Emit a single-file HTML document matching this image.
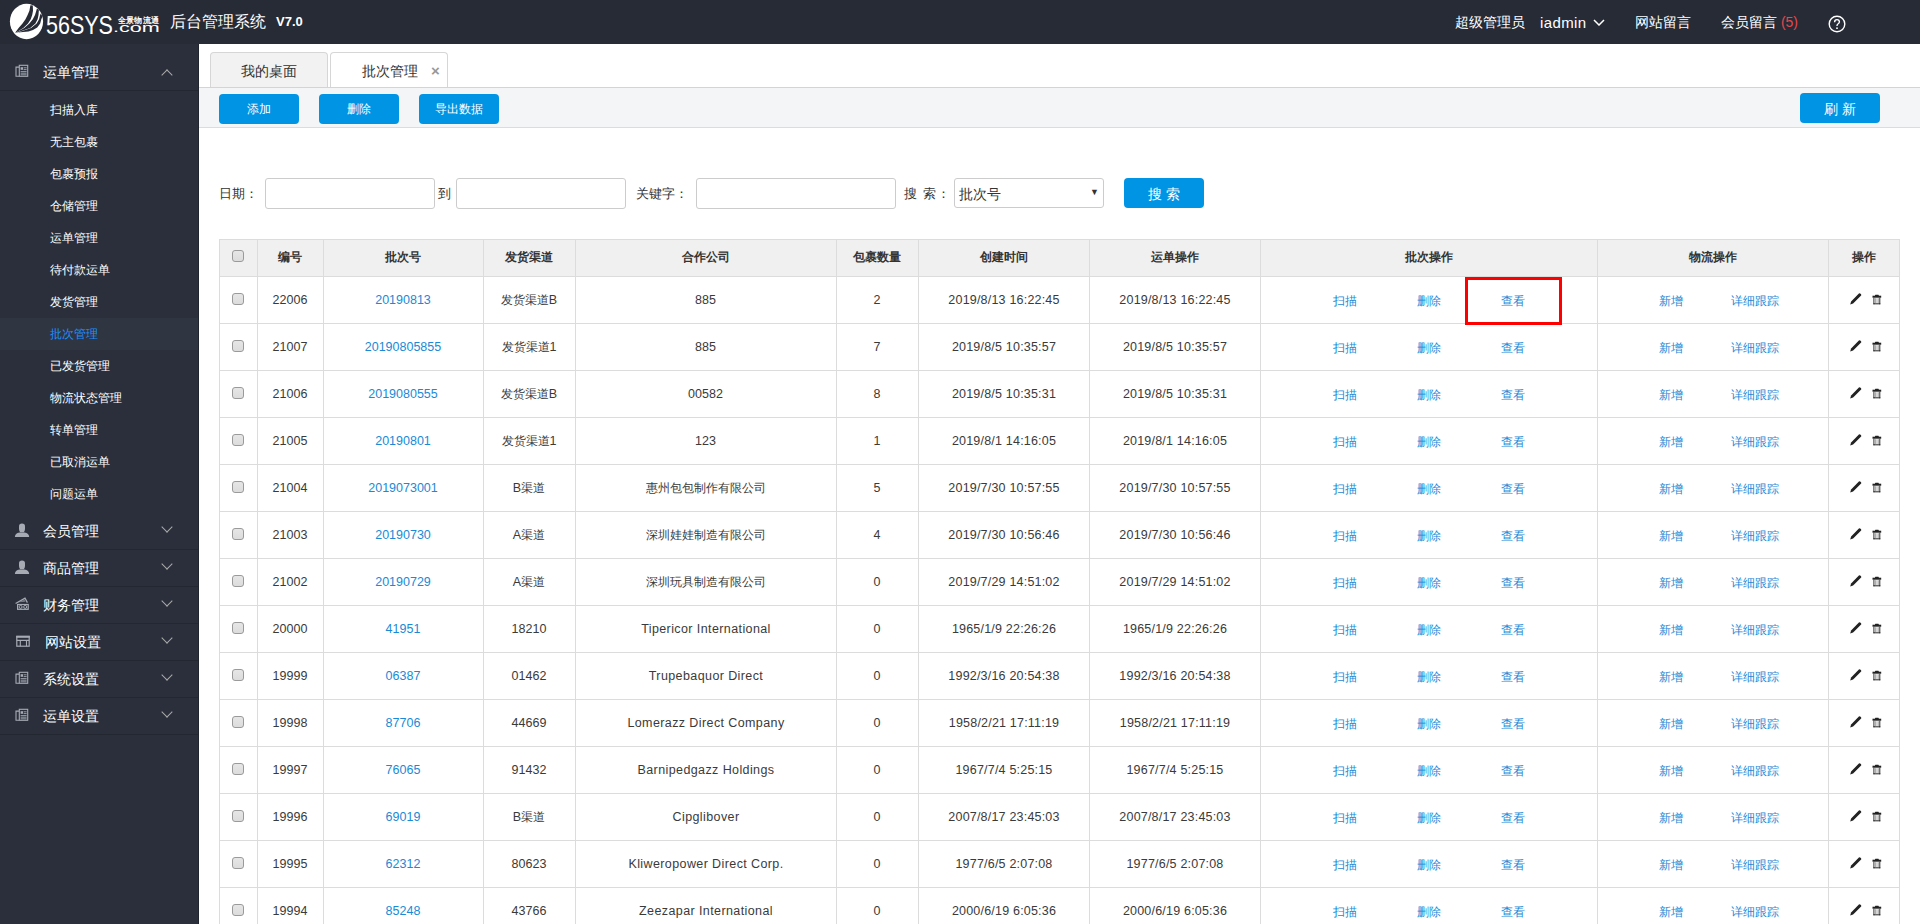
<!DOCTYPE html>
<html><head><meta charset="utf-8"><style>
*{margin:0;padding:0;box-sizing:border-box}
body{width:1920px;height:924px;overflow:hidden;background:#fff;font-family:"Liberation Sans",sans-serif;position:relative}
#hdr{position:absolute;left:0;top:0;width:1920px;height:44px;background:#272b36;color:#fff}
.logo{position:absolute;left:0;top:0;width:165px;height:44px}
.l56{position:absolute;left:46px;top:11px;font-size:25px;line-height:29px;color:#fff;transform:scaleX(0.86);transform-origin:left}
.lcom{position:absolute;left:113px;top:21px;font-size:13px;line-height:14px;color:#fff;transform:scaleX(1.66);transform-origin:left}
.lcn{position:absolute;left:118px;top:16px;font-size:8px;line-height:10px;color:#fff;font-weight:bold;letter-spacing:0.2px}
.htitle{position:absolute;left:170px;top:12px;font-size:16px;color:#fff}
.hver{position:absolute;left:276px;top:14px;font-size:13px;font-weight:bold;color:#fff}
.hr{position:absolute;top:14px;font-size:14px;color:#fff;white-space:nowrap}
#side{position:absolute;left:0;top:44px;width:199px;height:880px;background:#2a2f3b;border-right:1px solid #20242c}
.sgroup{position:absolute;left:0;width:198px;height:37px;border-bottom:1px solid #23272f;color:#fff}
#side .sgroup, #side .sitem{margin-top:-44px}
.sic{position:absolute;left:14px;top:10px;width:16px;height:16px}
.sic svg{display:block}
.stxt{position:absolute;left:43px;top:10px;font-size:14px;white-space:nowrap}
.chev{position:absolute;left:163px;top:10px;width:8px;height:8px;border-right:1px solid #aaa;border-bottom:1px solid #aaa;transform:rotate(45deg)}
.chev.up{top:26.5px;transform:rotate(-135deg)}
.sitem{position:absolute;left:0;width:198px;height:32px;line-height:32px;padding-left:50px;font-size:12px;color:#fff}
.sitem.active{background:#2f3541;color:#1e90ff}
#main{position:absolute;left:0;top:0;width:1920px;height:924px}
.tabline{position:absolute;left:199px;top:87px;width:1721px;height:41px;background:#f4f5f6;border-top:1px solid #d4d4d4;border-bottom:1px solid #dcdcdc}
.tab{position:absolute;top:52px;height:35px;width:118px;border:1px solid #d6d6d6;border-bottom:none;border-radius:4px 4px 0 0;font-size:14px;line-height:36px;color:#333;text-align:center}
.t1{left:210px;background:#f2f2f2}
.t2{left:330px;background:#fff;padding-left:1px}
.x{position:absolute;left:100px;top:0;font-size:15px;font-weight:bold;color:#999}
.btn{position:absolute;width:80px;height:30px;background:#0094e5;color:#fff;border-radius:4px;font-size:12px;line-height:30px;text-align:center}
.lbl{position:absolute;top:185px;font-size:13px;color:#333;white-space:nowrap}
.inp{position:absolute;top:178px;height:31px;border:1px solid #ccc;border-radius:3px}
.sel{position:absolute;left:954px;top:178px;width:150px;height:30px;border:1px solid #ccc;border-radius:3px;font-size:14px;line-height:31px;padding-left:4px;color:#333}
.arr{position:absolute;right:4px;top:-2px;font-size:9px}
.thead{position:absolute;left:219px;width:1681px;background:#f0f0f0}
.th{position:absolute;text-align:center;font-size:12px;font-weight:bold;color:#333}
.td{position:absolute;text-align:center;font-size:12.5px;color:#3a3a3a;white-space:nowrap}
.td.dt{letter-spacing:0.2px;padding-left:1px}
.td.en{letter-spacing:0.4px;padding-left:1px}
.cj{font-size:12px;letter-spacing:0}
.td.link{color:#1a8ad6}
.lk{position:absolute;font-size:12px;color:#1a8ad6;white-space:nowrap}
.icw{position:absolute;width:12px;height:12px}
.cb{position:absolute;width:12px;height:12px;border:1px solid #9a9a9a;border-radius:3px;background:linear-gradient(#e6e6e6,#dcdcdc)}
.hl{position:absolute;left:219px;width:1681px;height:1px;background:#dcdcdc}
.vl{position:absolute;width:1px;background:#dcdcdc}
.redbox{position:absolute;left:1465px;top:277px;width:97px;height:48px;border:3px solid #f00}

</style></head><body>
<div id="hdr">
  <div class="logo">
    <svg width="50" height="44" viewBox="0 0 50 44" style="position:absolute;left:0;top:0">
      <ellipse cx="26.5" cy="21.5" rx="16.6" ry="17.7" fill="#fff"/>
      <path d="M15.1 32.7 L18.6 28 L22.5 23.6 L25.5 19.3 L27.6 15 L29.4 10.7 L30.4 5.2 L32.8 5.6 L33.0 10.7 L32.2 15 L30.7 19.3 L28 23.6 L23.3 28 L16 32.5Z" fill="#272b36"/>
      <path d="M16 32.6 L24.2 28 L29.4 23.6 L32.8 19.3 L35 15 L36.3 10.7 L36.9 8.6 L38.9 9.8 L38.5 15 L37.6 19.3 L35.4 23.6 L30.2 28 L17 32.6Z" fill="#272b36"/>
      <path d="M17 32.7 L31.1 28 L36.7 23.6 L39.1 19.3 L40.1 15 L40.8 13.6 L42.5 16.5 L41.3 19.3 L40.2 23.6 L37.2 27.6 L33 30 L28.5 31.4 L15.1 32.7Z" fill="#272b36"/>
    </svg>
    <div class="l56">56SYS</div><div class="lcom">.com</div><div class="lcn">全景物流通</div>
  </div>
  <div class="htitle">后台管理系统</div><div class="hver">V7.0</div>
  <div class="hr" style="left:1455px">超级管理员</div>
  <div class="hr" style="left:1540px;font-size:15px;letter-spacing:0.4px">iadmin</div>
  <svg style="position:absolute;left:1593px;top:19px" width="12" height="7" viewBox="0 0 12 7"><path d="M1 1 L6 6 L11 1" fill="none" stroke="#fff" stroke-width="1.5"/></svg>
  <div class="hr" style="left:1635px">网站留言</div>
  <div class="hr" style="left:1721px">会员留言 <span style="color:#e5484d">(5)</span></div>
  <svg style="position:absolute;left:1828px;top:15px" width="18" height="18" viewBox="0 0 18 18"><circle cx="9" cy="9" r="7.8" fill="none" stroke="#fff" stroke-width="1.4"/><path d="M6.6 7.2 Q6.6 4.6 9 4.6 Q11.4 4.6 11.4 6.8 Q11.4 8.2 9.9 9 Q9 9.5 9 11" fill="none" stroke="#fff" stroke-width="1.4"/><circle cx="9" cy="13.2" r="0.9" fill="#fff"/></svg>
</div>
<div id="side">
<div class="sgroup" style="top:44px;height:47px"><span class="sic" style="top:20px"><svg width="16" height="16" viewBox="0 0 16 16"><path d="M5 3.1 H2 V12.3 H5" fill="none" stroke="#a6abb4" stroke-width="1.1"/><rect x="5.3" y="1.3" width="8.4" height="11" fill="none" stroke="#a6abb4" stroke-width="1.1"/><rect x="6.6" y="3.2" width="2.4" height="2.6" fill="#a6abb4"/><path d="M9.6 3.8H12.6M9.6 5.6H12.6M6.6 7.6H12.6M6.6 9.2H12.6M6.6 10.8H12.6" stroke="#a6abb4" stroke-width="0.9"/></svg></span><span class="stxt" style="top:20px">运单管理</span><span class="chev up"></span></div>
<div class="sitem" style="top:94px">扫描入库</div>
<div class="sitem" style="top:126px">无主包裹</div>
<div class="sitem" style="top:158px">包裹预报</div>
<div class="sitem" style="top:190px">仓储管理</div>
<div class="sitem" style="top:222px">运单管理</div>
<div class="sitem" style="top:254px">待付款运单</div>
<div class="sitem" style="top:286px">发货管理</div>
<div class="sitem active" style="top:318px">批次管理</div>
<div class="sitem" style="top:350px">已发货管理</div>
<div class="sitem" style="top:382px">物流状态管理</div>
<div class="sitem" style="top:414px">转单管理</div>
<div class="sitem" style="top:446px">已取消运单</div>
<div class="sitem" style="top:478px">问题运单</div>
<div class="sgroup g2" style="top:513px"><span class="sic" style="top:10px"><svg width="16" height="16" viewBox="0 0 16 16"><path d="M5 3.2 Q5 0.4 8 0.4 Q11 0.4 11 3.2 L11 6 Q11 8 9.8 9.3 L6.2 9.3 Q5 8 5 6 Z" fill="#a6abb4"/><path d="M0.9 14 Q1 10.5 5.5 9.6 L10.5 9.6 Q15 10.5 15.2 14 Z" fill="#a6abb4"/></svg></span><span class="stxt" style="left:43px">会员管理</span><span class="chev"></span></div>
<div class="sgroup g2" style="top:550px"><span class="sic" style="top:10px"><svg width="16" height="16" viewBox="0 0 16 16"><path d="M5 3.2 Q5 0.4 8 0.4 Q11 0.4 11 3.2 L11 6 Q11 8 9.8 9.3 L6.2 9.3 Q5 8 5 6 Z" fill="#a6abb4"/><path d="M0.9 14 Q1 10.5 5.5 9.6 L10.5 9.6 Q15 10.5 15.2 14 Z" fill="#a6abb4"/></svg></span><span class="stxt" style="left:43px">商品管理</span><span class="chev"></span></div>
<div class="sgroup g2" style="top:587px"><span class="sic" style="top:10px"><svg width="16" height="16" viewBox="0 0 16 16"><path d="M1.6 6.6 L11 1.2 L13.4 5.6" fill="none" stroke="#a6abb4" stroke-width="1.2"/><path d="M5 5.3 L10.5 2.6 L11.5 4.8Z" fill="#a6abb4" opacity="0.6"/><rect x="3.6" y="7.5" width="10.6" height="4.8" fill="none" stroke="#a6abb4" stroke-width="1.2"/><circle cx="6.6" cy="9.9" r="1.5" fill="none" stroke="#a6abb4" stroke-width="1"/><circle cx="11.2" cy="9.9" r="1.5" fill="none" stroke="#a6abb4" stroke-width="1"/></svg></span><span class="stxt" style="left:43px">财务管理</span><span class="chev"></span></div>
<div class="sgroup g2" style="top:624px"><span class="sic" style="top:11px"><svg width="16" height="16" viewBox="0 0 16 16"><rect x="2.8" y="1.4" width="12.4" height="9.8" fill="none" stroke="#a6abb4" stroke-width="1.2"/><rect x="2.2" y="0.8" width="13.6" height="2" fill="#a6abb4"/><path d="M2.8 5.4H15.2M6.3 5.4V11.2M12.5 5.4V11.2" stroke="#a6abb4" stroke-width="1.1"/></svg></span><span class="stxt" style="left:45px">网站设置</span><span class="chev"></span></div>
<div class="sgroup g2" style="top:661px"><span class="sic" style="top:10px"><svg width="16" height="16" viewBox="0 0 16 16"><path d="M5 3.1 H2 V12.3 H5" fill="none" stroke="#a6abb4" stroke-width="1.1"/><rect x="5.3" y="1.3" width="8.4" height="11" fill="none" stroke="#a6abb4" stroke-width="1.1"/><rect x="6.6" y="3.2" width="2.4" height="2.6" fill="#a6abb4"/><path d="M9.6 3.8H12.6M9.6 5.6H12.6M6.6 7.6H12.6M6.6 9.2H12.6M6.6 10.8H12.6" stroke="#a6abb4" stroke-width="0.9"/></svg></span><span class="stxt" style="left:43px">系统设置</span><span class="chev"></span></div>
<div class="sgroup g2" style="top:698px"><span class="sic" style="top:10px"><svg width="16" height="16" viewBox="0 0 16 16"><path d="M5 3.1 H2 V12.3 H5" fill="none" stroke="#a6abb4" stroke-width="1.1"/><rect x="5.3" y="1.3" width="8.4" height="11" fill="none" stroke="#a6abb4" stroke-width="1.1"/><rect x="6.6" y="3.2" width="2.4" height="2.6" fill="#a6abb4"/><path d="M9.6 3.8H12.6M9.6 5.6H12.6M6.6 7.6H12.6M6.6 9.2H12.6M6.6 10.8H12.6" stroke="#a6abb4" stroke-width="0.9"/></svg></span><span class="stxt" style="left:43px">运单设置</span><span class="chev"></span></div>
</div>
<div id="main">
  <div class="tabline"></div>
  <div class="tab t1">我的桌面</div>
  <div class="tab t2">批次管理<span class="x">×</span></div>
  <div class="toolbar"></div>
  <div class="btn" style="left:219px;top:94px">添加</div>
  <div class="btn" style="left:319px;top:94px">删除</div>
  <div class="btn" style="left:419px;top:94px">导出数据</div>
  <div class="btn" style="left:1800px;top:93px;font-size:14px;line-height:32px">刷 新</div>
  <div class="lbl" style="left:219px">日期：</div>
  <div class="inp" style="left:265px;width:170px"></div>
  <div class="lbl" style="left:438px">到</div>
  <div class="inp" style="left:456px;width:170px"></div>
  <div class="lbl" style="left:636px">关键字：</div>
  <div class="inp" style="left:696px;width:200px"></div>
  <div class="lbl" style="left:904px;letter-spacing:1px">搜 索：</div>
  <div class="sel">批次号<span class="arr">▼</span></div>
  <div class="btn" style="left:1124px;top:178px;height:30px;line-height:32px;font-size:14px">搜 索</div>
<div class="thead" style="top:239px;height:37px"></div>
<div class="cb" style="left:232px;top:250px"></div>
<div class="th" style="left:257px;width:66px;top:239px;height:37px;line-height:37px">编号</div>
<div class="th" style="left:323px;width:160px;top:239px;height:37px;line-height:37px">批次号</div>
<div class="th" style="left:483px;width:92px;top:239px;height:37px;line-height:37px">发货渠道</div>
<div class="th" style="left:575px;width:261px;top:239px;height:37px;line-height:37px">合作公司</div>
<div class="th" style="left:836px;width:82px;top:239px;height:37px;line-height:37px">包裹数量</div>
<div class="th" style="left:918px;width:171px;top:239px;height:37px;line-height:37px">创建时间</div>
<div class="th" style="left:1089px;width:171px;top:239px;height:37px;line-height:37px">运单操作</div>
<div class="th" style="left:1260px;width:337px;top:239px;height:37px;line-height:37px">批次操作</div>
<div class="th" style="left:1597px;width:231px;top:239px;height:37px;line-height:37px">物流操作</div>
<div class="th" style="left:1828px;width:71px;top:239px;height:37px;line-height:37px">操作</div>
<div class="cb" style="left:232px;top:293px"></div>
<div class="td" style="left:257px;width:66px;top:277px;height:47px;line-height:47px">22006</div>
<div class="td link" style="left:323px;width:160px;top:277px;height:47px;line-height:47px">20190813</div>
<div class="td" style="left:483px;width:92px;top:277px;height:47px;line-height:47px"><span class="cj">发货渠道</span>B</div>
<div class="td" style="left:575px;width:261px;top:277px;height:47px;line-height:47px">885</div>
<div class="td" style="left:836px;width:82px;top:277px;height:47px;line-height:47px">2</div>
<div class="td dt" style="left:918px;width:171px;top:277px;height:47px;line-height:47px">2019/8/13 16:22:45</div>
<div class="td dt" style="left:1089px;width:171px;top:277px;height:47px;line-height:47px">2019/8/13 16:22:45</div>
<div class="lk" style="left:1333px;top:278px;line-height:47px">扫描</div>
<div class="lk" style="left:1417px;top:278px;line-height:47px">删除</div>
<div class="lk" style="left:1501px;top:278px;line-height:47px">查看</div>
<div class="lk" style="left:1659px;top:278px;line-height:47px">新增</div>
<div class="lk" style="left:1731px;top:278px;line-height:47px">详细跟踪</div>
<div class="icw" style="left:1849px;top:292px"><svg width="13" height="13" viewBox="0 0 13 13"><path d="M1.2 11.6 L2.1 8.4 L9.9 0.6 Q10.7 -0.1 11.5 0.7 L11.9 1.1 Q12.6 1.9 11.9 2.7 L4.1 10.5 Z" fill="#222"/></svg></div>
<div class="icw" style="left:1872px;top:292px"><svg width="10" height="12" viewBox="0 0 10 12"><rect x="3" y="0.7" width="3.8" height="1.2" rx="0.5" fill="#222"/><rect x="0.5" y="1.7" width="8.7" height="2" fill="#222"/><rect x="1.4" y="3.7" width="1" height="6.6" fill="#333"/><rect x="7.3" y="3.7" width="1" height="6.6" fill="#333"/><rect x="1.4" y="9.3" width="6.9" height="1" fill="#222"/><rect x="3.3" y="4.2" width="0.7" height="5" fill="#8a8a8a"/><rect x="4.6" y="4.2" width="0.7" height="5" fill="#9a9a9a"/><rect x="5.9" y="4.2" width="0.7" height="5" fill="#8a8a8a"/></svg></div>
<div class="cb" style="left:232px;top:340px"></div>
<div class="td" style="left:257px;width:66px;top:324px;height:47px;line-height:47px">21007</div>
<div class="td link" style="left:323px;width:160px;top:324px;height:47px;line-height:47px">20190805855</div>
<div class="td" style="left:483px;width:92px;top:324px;height:47px;line-height:47px"><span class="cj">发货渠道</span>1</div>
<div class="td" style="left:575px;width:261px;top:324px;height:47px;line-height:47px">885</div>
<div class="td" style="left:836px;width:82px;top:324px;height:47px;line-height:47px">7</div>
<div class="td dt" style="left:918px;width:171px;top:324px;height:47px;line-height:47px">2019/8/5 10:35:57</div>
<div class="td dt" style="left:1089px;width:171px;top:324px;height:47px;line-height:47px">2019/8/5 10:35:57</div>
<div class="lk" style="left:1333px;top:325px;line-height:47px">扫描</div>
<div class="lk" style="left:1417px;top:325px;line-height:47px">删除</div>
<div class="lk" style="left:1501px;top:325px;line-height:47px">查看</div>
<div class="lk" style="left:1659px;top:325px;line-height:47px">新增</div>
<div class="lk" style="left:1731px;top:325px;line-height:47px">详细跟踪</div>
<div class="icw" style="left:1849px;top:339px"><svg width="13" height="13" viewBox="0 0 13 13"><path d="M1.2 11.6 L2.1 8.4 L9.9 0.6 Q10.7 -0.1 11.5 0.7 L11.9 1.1 Q12.6 1.9 11.9 2.7 L4.1 10.5 Z" fill="#222"/></svg></div>
<div class="icw" style="left:1872px;top:339px"><svg width="10" height="12" viewBox="0 0 10 12"><rect x="3" y="0.7" width="3.8" height="1.2" rx="0.5" fill="#222"/><rect x="0.5" y="1.7" width="8.7" height="2" fill="#222"/><rect x="1.4" y="3.7" width="1" height="6.6" fill="#333"/><rect x="7.3" y="3.7" width="1" height="6.6" fill="#333"/><rect x="1.4" y="9.3" width="6.9" height="1" fill="#222"/><rect x="3.3" y="4.2" width="0.7" height="5" fill="#8a8a8a"/><rect x="4.6" y="4.2" width="0.7" height="5" fill="#9a9a9a"/><rect x="5.9" y="4.2" width="0.7" height="5" fill="#8a8a8a"/></svg></div>
<div class="cb" style="left:232px;top:387px"></div>
<div class="td" style="left:257px;width:66px;top:371px;height:47px;line-height:47px">21006</div>
<div class="td link" style="left:323px;width:160px;top:371px;height:47px;line-height:47px">2019080555</div>
<div class="td" style="left:483px;width:92px;top:371px;height:47px;line-height:47px"><span class="cj">发货渠道</span>B</div>
<div class="td" style="left:575px;width:261px;top:371px;height:47px;line-height:47px">00582</div>
<div class="td" style="left:836px;width:82px;top:371px;height:47px;line-height:47px">8</div>
<div class="td dt" style="left:918px;width:171px;top:371px;height:47px;line-height:47px">2019/8/5 10:35:31</div>
<div class="td dt" style="left:1089px;width:171px;top:371px;height:47px;line-height:47px">2019/8/5 10:35:31</div>
<div class="lk" style="left:1333px;top:372px;line-height:47px">扫描</div>
<div class="lk" style="left:1417px;top:372px;line-height:47px">删除</div>
<div class="lk" style="left:1501px;top:372px;line-height:47px">查看</div>
<div class="lk" style="left:1659px;top:372px;line-height:47px">新增</div>
<div class="lk" style="left:1731px;top:372px;line-height:47px">详细跟踪</div>
<div class="icw" style="left:1849px;top:386px"><svg width="13" height="13" viewBox="0 0 13 13"><path d="M1.2 11.6 L2.1 8.4 L9.9 0.6 Q10.7 -0.1 11.5 0.7 L11.9 1.1 Q12.6 1.9 11.9 2.7 L4.1 10.5 Z" fill="#222"/></svg></div>
<div class="icw" style="left:1872px;top:386px"><svg width="10" height="12" viewBox="0 0 10 12"><rect x="3" y="0.7" width="3.8" height="1.2" rx="0.5" fill="#222"/><rect x="0.5" y="1.7" width="8.7" height="2" fill="#222"/><rect x="1.4" y="3.7" width="1" height="6.6" fill="#333"/><rect x="7.3" y="3.7" width="1" height="6.6" fill="#333"/><rect x="1.4" y="9.3" width="6.9" height="1" fill="#222"/><rect x="3.3" y="4.2" width="0.7" height="5" fill="#8a8a8a"/><rect x="4.6" y="4.2" width="0.7" height="5" fill="#9a9a9a"/><rect x="5.9" y="4.2" width="0.7" height="5" fill="#8a8a8a"/></svg></div>
<div class="cb" style="left:232px;top:434px"></div>
<div class="td" style="left:257px;width:66px;top:418px;height:47px;line-height:47px">21005</div>
<div class="td link" style="left:323px;width:160px;top:418px;height:47px;line-height:47px">20190801</div>
<div class="td" style="left:483px;width:92px;top:418px;height:47px;line-height:47px"><span class="cj">发货渠道</span>1</div>
<div class="td" style="left:575px;width:261px;top:418px;height:47px;line-height:47px">123</div>
<div class="td" style="left:836px;width:82px;top:418px;height:47px;line-height:47px">1</div>
<div class="td dt" style="left:918px;width:171px;top:418px;height:47px;line-height:47px">2019/8/1 14:16:05</div>
<div class="td dt" style="left:1089px;width:171px;top:418px;height:47px;line-height:47px">2019/8/1 14:16:05</div>
<div class="lk" style="left:1333px;top:419px;line-height:47px">扫描</div>
<div class="lk" style="left:1417px;top:419px;line-height:47px">删除</div>
<div class="lk" style="left:1501px;top:419px;line-height:47px">查看</div>
<div class="lk" style="left:1659px;top:419px;line-height:47px">新增</div>
<div class="lk" style="left:1731px;top:419px;line-height:47px">详细跟踪</div>
<div class="icw" style="left:1849px;top:433px"><svg width="13" height="13" viewBox="0 0 13 13"><path d="M1.2 11.6 L2.1 8.4 L9.9 0.6 Q10.7 -0.1 11.5 0.7 L11.9 1.1 Q12.6 1.9 11.9 2.7 L4.1 10.5 Z" fill="#222"/></svg></div>
<div class="icw" style="left:1872px;top:433px"><svg width="10" height="12" viewBox="0 0 10 12"><rect x="3" y="0.7" width="3.8" height="1.2" rx="0.5" fill="#222"/><rect x="0.5" y="1.7" width="8.7" height="2" fill="#222"/><rect x="1.4" y="3.7" width="1" height="6.6" fill="#333"/><rect x="7.3" y="3.7" width="1" height="6.6" fill="#333"/><rect x="1.4" y="9.3" width="6.9" height="1" fill="#222"/><rect x="3.3" y="4.2" width="0.7" height="5" fill="#8a8a8a"/><rect x="4.6" y="4.2" width="0.7" height="5" fill="#9a9a9a"/><rect x="5.9" y="4.2" width="0.7" height="5" fill="#8a8a8a"/></svg></div>
<div class="cb" style="left:232px;top:481px"></div>
<div class="td" style="left:257px;width:66px;top:465px;height:47px;line-height:47px">21004</div>
<div class="td link" style="left:323px;width:160px;top:465px;height:47px;line-height:47px">2019073001</div>
<div class="td" style="left:483px;width:92px;top:465px;height:47px;line-height:47px">B<span class="cj">渠道</span></div>
<div class="td" style="left:575px;width:261px;top:465px;height:47px;line-height:47px"><span class="cj">惠州包包制作有限公司</span></div>
<div class="td" style="left:836px;width:82px;top:465px;height:47px;line-height:47px">5</div>
<div class="td dt" style="left:918px;width:171px;top:465px;height:47px;line-height:47px">2019/7/30 10:57:55</div>
<div class="td dt" style="left:1089px;width:171px;top:465px;height:47px;line-height:47px">2019/7/30 10:57:55</div>
<div class="lk" style="left:1333px;top:466px;line-height:47px">扫描</div>
<div class="lk" style="left:1417px;top:466px;line-height:47px">删除</div>
<div class="lk" style="left:1501px;top:466px;line-height:47px">查看</div>
<div class="lk" style="left:1659px;top:466px;line-height:47px">新增</div>
<div class="lk" style="left:1731px;top:466px;line-height:47px">详细跟踪</div>
<div class="icw" style="left:1849px;top:480px"><svg width="13" height="13" viewBox="0 0 13 13"><path d="M1.2 11.6 L2.1 8.4 L9.9 0.6 Q10.7 -0.1 11.5 0.7 L11.9 1.1 Q12.6 1.9 11.9 2.7 L4.1 10.5 Z" fill="#222"/></svg></div>
<div class="icw" style="left:1872px;top:480px"><svg width="10" height="12" viewBox="0 0 10 12"><rect x="3" y="0.7" width="3.8" height="1.2" rx="0.5" fill="#222"/><rect x="0.5" y="1.7" width="8.7" height="2" fill="#222"/><rect x="1.4" y="3.7" width="1" height="6.6" fill="#333"/><rect x="7.3" y="3.7" width="1" height="6.6" fill="#333"/><rect x="1.4" y="9.3" width="6.9" height="1" fill="#222"/><rect x="3.3" y="4.2" width="0.7" height="5" fill="#8a8a8a"/><rect x="4.6" y="4.2" width="0.7" height="5" fill="#9a9a9a"/><rect x="5.9" y="4.2" width="0.7" height="5" fill="#8a8a8a"/></svg></div>
<div class="cb" style="left:232px;top:528px"></div>
<div class="td" style="left:257px;width:66px;top:512px;height:47px;line-height:47px">21003</div>
<div class="td link" style="left:323px;width:160px;top:512px;height:47px;line-height:47px">20190730</div>
<div class="td" style="left:483px;width:92px;top:512px;height:47px;line-height:47px">A<span class="cj">渠道</span></div>
<div class="td" style="left:575px;width:261px;top:512px;height:47px;line-height:47px"><span class="cj">深圳娃娃制造有限公司</span></div>
<div class="td" style="left:836px;width:82px;top:512px;height:47px;line-height:47px">4</div>
<div class="td dt" style="left:918px;width:171px;top:512px;height:47px;line-height:47px">2019/7/30 10:56:46</div>
<div class="td dt" style="left:1089px;width:171px;top:512px;height:47px;line-height:47px">2019/7/30 10:56:46</div>
<div class="lk" style="left:1333px;top:513px;line-height:47px">扫描</div>
<div class="lk" style="left:1417px;top:513px;line-height:47px">删除</div>
<div class="lk" style="left:1501px;top:513px;line-height:47px">查看</div>
<div class="lk" style="left:1659px;top:513px;line-height:47px">新增</div>
<div class="lk" style="left:1731px;top:513px;line-height:47px">详细跟踪</div>
<div class="icw" style="left:1849px;top:527px"><svg width="13" height="13" viewBox="0 0 13 13"><path d="M1.2 11.6 L2.1 8.4 L9.9 0.6 Q10.7 -0.1 11.5 0.7 L11.9 1.1 Q12.6 1.9 11.9 2.7 L4.1 10.5 Z" fill="#222"/></svg></div>
<div class="icw" style="left:1872px;top:527px"><svg width="10" height="12" viewBox="0 0 10 12"><rect x="3" y="0.7" width="3.8" height="1.2" rx="0.5" fill="#222"/><rect x="0.5" y="1.7" width="8.7" height="2" fill="#222"/><rect x="1.4" y="3.7" width="1" height="6.6" fill="#333"/><rect x="7.3" y="3.7" width="1" height="6.6" fill="#333"/><rect x="1.4" y="9.3" width="6.9" height="1" fill="#222"/><rect x="3.3" y="4.2" width="0.7" height="5" fill="#8a8a8a"/><rect x="4.6" y="4.2" width="0.7" height="5" fill="#9a9a9a"/><rect x="5.9" y="4.2" width="0.7" height="5" fill="#8a8a8a"/></svg></div>
<div class="cb" style="left:232px;top:575px"></div>
<div class="td" style="left:257px;width:66px;top:559px;height:47px;line-height:47px">21002</div>
<div class="td link" style="left:323px;width:160px;top:559px;height:47px;line-height:47px">20190729</div>
<div class="td" style="left:483px;width:92px;top:559px;height:47px;line-height:47px">A<span class="cj">渠道</span></div>
<div class="td" style="left:575px;width:261px;top:559px;height:47px;line-height:47px"><span class="cj">深圳玩具制造有限公司</span></div>
<div class="td" style="left:836px;width:82px;top:559px;height:47px;line-height:47px">0</div>
<div class="td dt" style="left:918px;width:171px;top:559px;height:47px;line-height:47px">2019/7/29 14:51:02</div>
<div class="td dt" style="left:1089px;width:171px;top:559px;height:47px;line-height:47px">2019/7/29 14:51:02</div>
<div class="lk" style="left:1333px;top:560px;line-height:47px">扫描</div>
<div class="lk" style="left:1417px;top:560px;line-height:47px">删除</div>
<div class="lk" style="left:1501px;top:560px;line-height:47px">查看</div>
<div class="lk" style="left:1659px;top:560px;line-height:47px">新增</div>
<div class="lk" style="left:1731px;top:560px;line-height:47px">详细跟踪</div>
<div class="icw" style="left:1849px;top:574px"><svg width="13" height="13" viewBox="0 0 13 13"><path d="M1.2 11.6 L2.1 8.4 L9.9 0.6 Q10.7 -0.1 11.5 0.7 L11.9 1.1 Q12.6 1.9 11.9 2.7 L4.1 10.5 Z" fill="#222"/></svg></div>
<div class="icw" style="left:1872px;top:574px"><svg width="10" height="12" viewBox="0 0 10 12"><rect x="3" y="0.7" width="3.8" height="1.2" rx="0.5" fill="#222"/><rect x="0.5" y="1.7" width="8.7" height="2" fill="#222"/><rect x="1.4" y="3.7" width="1" height="6.6" fill="#333"/><rect x="7.3" y="3.7" width="1" height="6.6" fill="#333"/><rect x="1.4" y="9.3" width="6.9" height="1" fill="#222"/><rect x="3.3" y="4.2" width="0.7" height="5" fill="#8a8a8a"/><rect x="4.6" y="4.2" width="0.7" height="5" fill="#9a9a9a"/><rect x="5.9" y="4.2" width="0.7" height="5" fill="#8a8a8a"/></svg></div>
<div class="cb" style="left:232px;top:622px"></div>
<div class="td" style="left:257px;width:66px;top:606px;height:47px;line-height:47px">20000</div>
<div class="td link" style="left:323px;width:160px;top:606px;height:47px;line-height:47px">41951</div>
<div class="td" style="left:483px;width:92px;top:606px;height:47px;line-height:47px">18210</div>
<div class="td en" style="left:575px;width:261px;top:606px;height:47px;line-height:47px">Tipericor International</div>
<div class="td" style="left:836px;width:82px;top:606px;height:47px;line-height:47px">0</div>
<div class="td dt" style="left:918px;width:171px;top:606px;height:47px;line-height:47px">1965/1/9 22:26:26</div>
<div class="td dt" style="left:1089px;width:171px;top:606px;height:47px;line-height:47px">1965/1/9 22:26:26</div>
<div class="lk" style="left:1333px;top:607px;line-height:47px">扫描</div>
<div class="lk" style="left:1417px;top:607px;line-height:47px">删除</div>
<div class="lk" style="left:1501px;top:607px;line-height:47px">查看</div>
<div class="lk" style="left:1659px;top:607px;line-height:47px">新增</div>
<div class="lk" style="left:1731px;top:607px;line-height:47px">详细跟踪</div>
<div class="icw" style="left:1849px;top:621px"><svg width="13" height="13" viewBox="0 0 13 13"><path d="M1.2 11.6 L2.1 8.4 L9.9 0.6 Q10.7 -0.1 11.5 0.7 L11.9 1.1 Q12.6 1.9 11.9 2.7 L4.1 10.5 Z" fill="#222"/></svg></div>
<div class="icw" style="left:1872px;top:621px"><svg width="10" height="12" viewBox="0 0 10 12"><rect x="3" y="0.7" width="3.8" height="1.2" rx="0.5" fill="#222"/><rect x="0.5" y="1.7" width="8.7" height="2" fill="#222"/><rect x="1.4" y="3.7" width="1" height="6.6" fill="#333"/><rect x="7.3" y="3.7" width="1" height="6.6" fill="#333"/><rect x="1.4" y="9.3" width="6.9" height="1" fill="#222"/><rect x="3.3" y="4.2" width="0.7" height="5" fill="#8a8a8a"/><rect x="4.6" y="4.2" width="0.7" height="5" fill="#9a9a9a"/><rect x="5.9" y="4.2" width="0.7" height="5" fill="#8a8a8a"/></svg></div>
<div class="cb" style="left:232px;top:669px"></div>
<div class="td" style="left:257px;width:66px;top:653px;height:47px;line-height:47px">19999</div>
<div class="td link" style="left:323px;width:160px;top:653px;height:47px;line-height:47px">06387</div>
<div class="td" style="left:483px;width:92px;top:653px;height:47px;line-height:47px">01462</div>
<div class="td en" style="left:575px;width:261px;top:653px;height:47px;line-height:47px">Trupebaquor Direct</div>
<div class="td" style="left:836px;width:82px;top:653px;height:47px;line-height:47px">0</div>
<div class="td dt" style="left:918px;width:171px;top:653px;height:47px;line-height:47px">1992/3/16 20:54:38</div>
<div class="td dt" style="left:1089px;width:171px;top:653px;height:47px;line-height:47px">1992/3/16 20:54:38</div>
<div class="lk" style="left:1333px;top:654px;line-height:47px">扫描</div>
<div class="lk" style="left:1417px;top:654px;line-height:47px">删除</div>
<div class="lk" style="left:1501px;top:654px;line-height:47px">查看</div>
<div class="lk" style="left:1659px;top:654px;line-height:47px">新增</div>
<div class="lk" style="left:1731px;top:654px;line-height:47px">详细跟踪</div>
<div class="icw" style="left:1849px;top:668px"><svg width="13" height="13" viewBox="0 0 13 13"><path d="M1.2 11.6 L2.1 8.4 L9.9 0.6 Q10.7 -0.1 11.5 0.7 L11.9 1.1 Q12.6 1.9 11.9 2.7 L4.1 10.5 Z" fill="#222"/></svg></div>
<div class="icw" style="left:1872px;top:668px"><svg width="10" height="12" viewBox="0 0 10 12"><rect x="3" y="0.7" width="3.8" height="1.2" rx="0.5" fill="#222"/><rect x="0.5" y="1.7" width="8.7" height="2" fill="#222"/><rect x="1.4" y="3.7" width="1" height="6.6" fill="#333"/><rect x="7.3" y="3.7" width="1" height="6.6" fill="#333"/><rect x="1.4" y="9.3" width="6.9" height="1" fill="#222"/><rect x="3.3" y="4.2" width="0.7" height="5" fill="#8a8a8a"/><rect x="4.6" y="4.2" width="0.7" height="5" fill="#9a9a9a"/><rect x="5.9" y="4.2" width="0.7" height="5" fill="#8a8a8a"/></svg></div>
<div class="cb" style="left:232px;top:716px"></div>
<div class="td" style="left:257px;width:66px;top:700px;height:47px;line-height:47px">19998</div>
<div class="td link" style="left:323px;width:160px;top:700px;height:47px;line-height:47px">87706</div>
<div class="td" style="left:483px;width:92px;top:700px;height:47px;line-height:47px">44669</div>
<div class="td en" style="left:575px;width:261px;top:700px;height:47px;line-height:47px">Lomerazz Direct Company</div>
<div class="td" style="left:836px;width:82px;top:700px;height:47px;line-height:47px">0</div>
<div class="td dt" style="left:918px;width:171px;top:700px;height:47px;line-height:47px">1958/2/21 17:11:19</div>
<div class="td dt" style="left:1089px;width:171px;top:700px;height:47px;line-height:47px">1958/2/21 17:11:19</div>
<div class="lk" style="left:1333px;top:701px;line-height:47px">扫描</div>
<div class="lk" style="left:1417px;top:701px;line-height:47px">删除</div>
<div class="lk" style="left:1501px;top:701px;line-height:47px">查看</div>
<div class="lk" style="left:1659px;top:701px;line-height:47px">新增</div>
<div class="lk" style="left:1731px;top:701px;line-height:47px">详细跟踪</div>
<div class="icw" style="left:1849px;top:715px"><svg width="13" height="13" viewBox="0 0 13 13"><path d="M1.2 11.6 L2.1 8.4 L9.9 0.6 Q10.7 -0.1 11.5 0.7 L11.9 1.1 Q12.6 1.9 11.9 2.7 L4.1 10.5 Z" fill="#222"/></svg></div>
<div class="icw" style="left:1872px;top:715px"><svg width="10" height="12" viewBox="0 0 10 12"><rect x="3" y="0.7" width="3.8" height="1.2" rx="0.5" fill="#222"/><rect x="0.5" y="1.7" width="8.7" height="2" fill="#222"/><rect x="1.4" y="3.7" width="1" height="6.6" fill="#333"/><rect x="7.3" y="3.7" width="1" height="6.6" fill="#333"/><rect x="1.4" y="9.3" width="6.9" height="1" fill="#222"/><rect x="3.3" y="4.2" width="0.7" height="5" fill="#8a8a8a"/><rect x="4.6" y="4.2" width="0.7" height="5" fill="#9a9a9a"/><rect x="5.9" y="4.2" width="0.7" height="5" fill="#8a8a8a"/></svg></div>
<div class="cb" style="left:232px;top:763px"></div>
<div class="td" style="left:257px;width:66px;top:747px;height:47px;line-height:47px">19997</div>
<div class="td link" style="left:323px;width:160px;top:747px;height:47px;line-height:47px">76065</div>
<div class="td" style="left:483px;width:92px;top:747px;height:47px;line-height:47px">91432</div>
<div class="td en" style="left:575px;width:261px;top:747px;height:47px;line-height:47px">Barnipedgazz Holdings</div>
<div class="td" style="left:836px;width:82px;top:747px;height:47px;line-height:47px">0</div>
<div class="td dt" style="left:918px;width:171px;top:747px;height:47px;line-height:47px">1967/7/4 5:25:15</div>
<div class="td dt" style="left:1089px;width:171px;top:747px;height:47px;line-height:47px">1967/7/4 5:25:15</div>
<div class="lk" style="left:1333px;top:748px;line-height:47px">扫描</div>
<div class="lk" style="left:1417px;top:748px;line-height:47px">删除</div>
<div class="lk" style="left:1501px;top:748px;line-height:47px">查看</div>
<div class="lk" style="left:1659px;top:748px;line-height:47px">新增</div>
<div class="lk" style="left:1731px;top:748px;line-height:47px">详细跟踪</div>
<div class="icw" style="left:1849px;top:762px"><svg width="13" height="13" viewBox="0 0 13 13"><path d="M1.2 11.6 L2.1 8.4 L9.9 0.6 Q10.7 -0.1 11.5 0.7 L11.9 1.1 Q12.6 1.9 11.9 2.7 L4.1 10.5 Z" fill="#222"/></svg></div>
<div class="icw" style="left:1872px;top:762px"><svg width="10" height="12" viewBox="0 0 10 12"><rect x="3" y="0.7" width="3.8" height="1.2" rx="0.5" fill="#222"/><rect x="0.5" y="1.7" width="8.7" height="2" fill="#222"/><rect x="1.4" y="3.7" width="1" height="6.6" fill="#333"/><rect x="7.3" y="3.7" width="1" height="6.6" fill="#333"/><rect x="1.4" y="9.3" width="6.9" height="1" fill="#222"/><rect x="3.3" y="4.2" width="0.7" height="5" fill="#8a8a8a"/><rect x="4.6" y="4.2" width="0.7" height="5" fill="#9a9a9a"/><rect x="5.9" y="4.2" width="0.7" height="5" fill="#8a8a8a"/></svg></div>
<div class="cb" style="left:232px;top:810px"></div>
<div class="td" style="left:257px;width:66px;top:794px;height:47px;line-height:47px">19996</div>
<div class="td link" style="left:323px;width:160px;top:794px;height:47px;line-height:47px">69019</div>
<div class="td" style="left:483px;width:92px;top:794px;height:47px;line-height:47px">B<span class="cj">渠道</span></div>
<div class="td en" style="left:575px;width:261px;top:794px;height:47px;line-height:47px">Cipglibover</div>
<div class="td" style="left:836px;width:82px;top:794px;height:47px;line-height:47px">0</div>
<div class="td dt" style="left:918px;width:171px;top:794px;height:47px;line-height:47px">2007/8/17 23:45:03</div>
<div class="td dt" style="left:1089px;width:171px;top:794px;height:47px;line-height:47px">2007/8/17 23:45:03</div>
<div class="lk" style="left:1333px;top:795px;line-height:47px">扫描</div>
<div class="lk" style="left:1417px;top:795px;line-height:47px">删除</div>
<div class="lk" style="left:1501px;top:795px;line-height:47px">查看</div>
<div class="lk" style="left:1659px;top:795px;line-height:47px">新增</div>
<div class="lk" style="left:1731px;top:795px;line-height:47px">详细跟踪</div>
<div class="icw" style="left:1849px;top:809px"><svg width="13" height="13" viewBox="0 0 13 13"><path d="M1.2 11.6 L2.1 8.4 L9.9 0.6 Q10.7 -0.1 11.5 0.7 L11.9 1.1 Q12.6 1.9 11.9 2.7 L4.1 10.5 Z" fill="#222"/></svg></div>
<div class="icw" style="left:1872px;top:809px"><svg width="10" height="12" viewBox="0 0 10 12"><rect x="3" y="0.7" width="3.8" height="1.2" rx="0.5" fill="#222"/><rect x="0.5" y="1.7" width="8.7" height="2" fill="#222"/><rect x="1.4" y="3.7" width="1" height="6.6" fill="#333"/><rect x="7.3" y="3.7" width="1" height="6.6" fill="#333"/><rect x="1.4" y="9.3" width="6.9" height="1" fill="#222"/><rect x="3.3" y="4.2" width="0.7" height="5" fill="#8a8a8a"/><rect x="4.6" y="4.2" width="0.7" height="5" fill="#9a9a9a"/><rect x="5.9" y="4.2" width="0.7" height="5" fill="#8a8a8a"/></svg></div>
<div class="cb" style="left:232px;top:857px"></div>
<div class="td" style="left:257px;width:66px;top:841px;height:47px;line-height:47px">19995</div>
<div class="td link" style="left:323px;width:160px;top:841px;height:47px;line-height:47px">62312</div>
<div class="td" style="left:483px;width:92px;top:841px;height:47px;line-height:47px">80623</div>
<div class="td en" style="left:575px;width:261px;top:841px;height:47px;line-height:47px">Kliweropower Direct Corp.</div>
<div class="td" style="left:836px;width:82px;top:841px;height:47px;line-height:47px">0</div>
<div class="td dt" style="left:918px;width:171px;top:841px;height:47px;line-height:47px">1977/6/5 2:07:08</div>
<div class="td dt" style="left:1089px;width:171px;top:841px;height:47px;line-height:47px">1977/6/5 2:07:08</div>
<div class="lk" style="left:1333px;top:842px;line-height:47px">扫描</div>
<div class="lk" style="left:1417px;top:842px;line-height:47px">删除</div>
<div class="lk" style="left:1501px;top:842px;line-height:47px">查看</div>
<div class="lk" style="left:1659px;top:842px;line-height:47px">新增</div>
<div class="lk" style="left:1731px;top:842px;line-height:47px">详细跟踪</div>
<div class="icw" style="left:1849px;top:856px"><svg width="13" height="13" viewBox="0 0 13 13"><path d="M1.2 11.6 L2.1 8.4 L9.9 0.6 Q10.7 -0.1 11.5 0.7 L11.9 1.1 Q12.6 1.9 11.9 2.7 L4.1 10.5 Z" fill="#222"/></svg></div>
<div class="icw" style="left:1872px;top:856px"><svg width="10" height="12" viewBox="0 0 10 12"><rect x="3" y="0.7" width="3.8" height="1.2" rx="0.5" fill="#222"/><rect x="0.5" y="1.7" width="8.7" height="2" fill="#222"/><rect x="1.4" y="3.7" width="1" height="6.6" fill="#333"/><rect x="7.3" y="3.7" width="1" height="6.6" fill="#333"/><rect x="1.4" y="9.3" width="6.9" height="1" fill="#222"/><rect x="3.3" y="4.2" width="0.7" height="5" fill="#8a8a8a"/><rect x="4.6" y="4.2" width="0.7" height="5" fill="#9a9a9a"/><rect x="5.9" y="4.2" width="0.7" height="5" fill="#8a8a8a"/></svg></div>
<div class="cb" style="left:232px;top:904px"></div>
<div class="td" style="left:257px;width:66px;top:888px;height:47px;line-height:47px">19994</div>
<div class="td link" style="left:323px;width:160px;top:888px;height:47px;line-height:47px">85248</div>
<div class="td" style="left:483px;width:92px;top:888px;height:47px;line-height:47px">43766</div>
<div class="td en" style="left:575px;width:261px;top:888px;height:47px;line-height:47px">Zeezapar International</div>
<div class="td" style="left:836px;width:82px;top:888px;height:47px;line-height:47px">0</div>
<div class="td dt" style="left:918px;width:171px;top:888px;height:47px;line-height:47px">2000/6/19 6:05:36</div>
<div class="td dt" style="left:1089px;width:171px;top:888px;height:47px;line-height:47px">2000/6/19 6:05:36</div>
<div class="lk" style="left:1333px;top:889px;line-height:47px">扫描</div>
<div class="lk" style="left:1417px;top:889px;line-height:47px">删除</div>
<div class="lk" style="left:1501px;top:889px;line-height:47px">查看</div>
<div class="lk" style="left:1659px;top:889px;line-height:47px">新增</div>
<div class="lk" style="left:1731px;top:889px;line-height:47px">详细跟踪</div>
<div class="icw" style="left:1849px;top:903px"><svg width="13" height="13" viewBox="0 0 13 13"><path d="M1.2 11.6 L2.1 8.4 L9.9 0.6 Q10.7 -0.1 11.5 0.7 L11.9 1.1 Q12.6 1.9 11.9 2.7 L4.1 10.5 Z" fill="#222"/></svg></div>
<div class="icw" style="left:1872px;top:903px"><svg width="10" height="12" viewBox="0 0 10 12"><rect x="3" y="0.7" width="3.8" height="1.2" rx="0.5" fill="#222"/><rect x="0.5" y="1.7" width="8.7" height="2" fill="#222"/><rect x="1.4" y="3.7" width="1" height="6.6" fill="#333"/><rect x="7.3" y="3.7" width="1" height="6.6" fill="#333"/><rect x="1.4" y="9.3" width="6.9" height="1" fill="#222"/><rect x="3.3" y="4.2" width="0.7" height="5" fill="#8a8a8a"/><rect x="4.6" y="4.2" width="0.7" height="5" fill="#9a9a9a"/><rect x="5.9" y="4.2" width="0.7" height="5" fill="#8a8a8a"/></svg></div>
<div class="hl" style="top:276px"></div>
<div class="hl" style="top:323px"></div>
<div class="hl" style="top:370px"></div>
<div class="hl" style="top:417px"></div>
<div class="hl" style="top:464px"></div>
<div class="hl" style="top:511px"></div>
<div class="hl" style="top:558px"></div>
<div class="hl" style="top:605px"></div>
<div class="hl" style="top:652px"></div>
<div class="hl" style="top:699px"></div>
<div class="hl" style="top:746px"></div>
<div class="hl" style="top:793px"></div>
<div class="hl" style="top:840px"></div>
<div class="hl" style="top:887px"></div>
<div class="hl" style="top:239px"></div>
<div class="vl" style="left:219px;top:239px;height:685px"></div>
<div class="vl" style="left:257px;top:239px;height:685px"></div>
<div class="vl" style="left:323px;top:239px;height:685px"></div>
<div class="vl" style="left:483px;top:239px;height:685px"></div>
<div class="vl" style="left:575px;top:239px;height:685px"></div>
<div class="vl" style="left:836px;top:239px;height:685px"></div>
<div class="vl" style="left:918px;top:239px;height:685px"></div>
<div class="vl" style="left:1089px;top:239px;height:685px"></div>
<div class="vl" style="left:1260px;top:239px;height:685px"></div>
<div class="vl" style="left:1597px;top:239px;height:685px"></div>
<div class="vl" style="left:1828px;top:239px;height:685px"></div>
<div class="vl" style="left:1899px;top:239px;height:685px"></div>
<div class="redbox"></div>
</div>
</body></html>
